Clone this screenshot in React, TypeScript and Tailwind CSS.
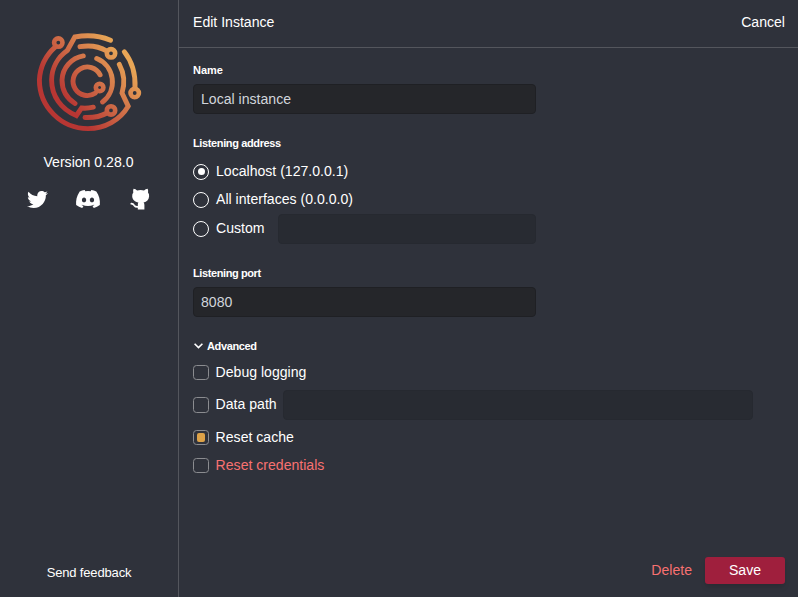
import type { ReactNode } from "react";
import { FaTwitter, FaDiscord } from "react-icons/fa";

function Logo() {
  return (
    <svg className="mr-[2px] block" width="108" height="102" viewBox="34 31 108 102" fill="none">
      <defs>
        <linearGradient id="ember" gradientUnits="userSpaceOnUse" x1="64" y1="98" x2="120" y2="52">
          <stop offset="0" stopColor="#b83633" />
          <stop offset="0.5" stopColor="#d06f48" />
          <stop offset="1" stopColor="#e8a656" />
        </linearGradient>
      </defs>
      <g stroke="url(#ember)" strokeWidth="4.9" strokeLinecap="round" strokeLinejoin="miter">
        <path d="M55.3 46.8A47.5 47.5 0 0 0 39.4 80A48.6 48.6 0 0 0 88 128.6C105 128.6 120 120 128.2 106.2L122 93A37 37 0 0 0 119.3 64.3" />
        <path d="M110.5 40.2C98 35 88 34.6 74.8 37L67.3 50.5A36.5 36.5 0 0 0 51.6 80C51.6 96 61 109 76.3 115.6L81.5 108Q87 108.6 93.3 107.2" />
        <path d="M80 46.7Q95 44 106.8 51" />
        <path d="M83.3 55.9A25.5 25.5 0 0 0 62 80C62 90 67 98.5 75 103.5" />
        <path d="M100.1 74.8A14.3 14.3 0 1 0 95.5 93" />
        <path d="M96.7 58.5A25.3 25.3 0 0 1 102.5 102" />
        <path d="M124.3 51.8Q136 66.5 135 88" />
        <path d="M85 117.5Q98 118 107 113" />
      </g>
      <g stroke="url(#ember)" strokeWidth="4.6">
        <circle cx="58.3" cy="42.6" r="4.2" />
        <circle cx="111" cy="53.3" r="4.2" />
        <circle cx="99.6" cy="87.5" r="3.8" />
        <circle cx="111" cy="110.4" r="4.2" />
        <circle cx="134.7" cy="93" r="4.2" />
      </g>
    </svg>
  );
}

function OctocatIcon() {
  return (
    <svg width="20" height="22" viewBox="0 0 20 22" fill="currentColor">
      <path d="M3.5.7C5 .8 6.2 1.7 7.2 2.4Q10.6 1.8 14 2.4C15 1.7 16.2.8 17.7.7Q18.4 2.7 18 4.6Q19.4 6.3 19.1 8.6C18.8 12 16.8 13.7 13.6 14.6Q14.4 15.6 14.4 17V21.4H7.8V17Q7.8 15.6 8.4 14.6C5 13.8 2.5 12 2.2 8.6Q2 6.3 3.3 4.6Q2.8 2.7 3.5.7Z" />
      <path d="M8.4 18.8C6 19.2 4.9 18.4 4.2 17.4C3.5 16.3 2.5 15.8 1.3 15.7" fill="none" stroke="currentColor" strokeWidth="1.7" strokeLinecap="round" />
    </svg>
  );
}

function Label({ children }: { children: ReactNode }) {
  return <div className="h-[14px] text-[11px] leading-[14px] font-bold">{children}</div>;
}

function Radio({ label, checked = false }: { label: string; checked?: boolean }) {
  return (
    <label className="flex items-center">
      <span className="mt-px flex size-4 items-center justify-center rounded-full border border-white">
        {checked && <span className="size-[7px] rounded-full bg-white" />}
      </span>
      <span className="ml-[7px]">{label}</span>
    </label>
  );
}

function Check({
  label,
  checked = false,
  danger = false,
  tall = false,
}: {
  label: string;
  checked?: boolean;
  danger?: boolean;
  tall?: boolean;
}) {
  return (
    <label className="flex items-center">
      <span
        className={`${tall ? "mt-[2px] h-4" : "mt-px h-[15px]"} flex w-4 items-center justify-center rounded-[3.5px] border border-[#8b8c90]`}
      >
        {checked && <span className="h-[9px] w-2 rounded-[2px] bg-[#dda248]" />}
      </span>
      <span className={danger ? "ml-[6.6px] text-[#f87171]" : "ml-[6.6px]"}>{label}</span>
    </label>
  );
}

const field = "h-[30px] rounded-[4px] border border-[#1f2024] bg-[#25262a] px-[7px] text-[#d1d5db] outline-none";
const disabledField = "h-[30px] rounded-[4px] border border-[#262930] bg-[#282b32] outline-none";

export default function App() {
  return (
    <div className="flex h-[597px] w-[798px] overflow-hidden bg-[#2f323b] font-['Liberation_Sans',Arial,sans-serif] text-[14.08px] leading-5 text-white">
      <aside className="flex w-[179px] shrink-0 flex-col items-center border-r border-[#54565d] pt-[31px] pb-[14px]">
        <Logo />
        <div className="mt-[19px] mr-px">Version 0.28.0</div>
        <div className="mt-[17px] mr-px flex h-5 w-[123px] items-center">
          <FaTwitter size={21} />
          <FaDiscord className="ml-[27px]" size={26} />
          <div className="ml-auto">
            <OctocatIcon />
          </div>
        </div>
        <div className="mt-auto text-[13px] tracking-[-0.16px]">Send feedback</div>
      </aside>
      <main className="flex min-w-0 flex-1 flex-col">
        <header className="flex h-12 shrink-0 items-center justify-between border-b border-[#54565d] pr-[13px] pb-[3px] pl-[14px]">
          <span>Edit Instance</span>
          <button>Cancel</button>
        </header>
        <section className="flex flex-col px-[14px] pt-[15px]">
          <Label>Name</Label>
          <input className={`${field} mt-[7px] w-[343px]`} defaultValue="Local instance" />
          <div className="mt-[22px] tracking-[-0.37px]">
            <Label>Listening address</Label>
          </div>
          <div className="mt-[11px] flex h-5 items-center">
            <Radio label="Localhost (127.0.0.1)" checked />
          </div>
          <div className="mt-2 flex h-5 items-center">
            <Radio label="All interfaces (0.0.0.0)" />
          </div>
          <div className="mt-[5px] flex h-[30px] w-[343px] items-start justify-between">
            <div className="mt-1">
              <Radio label="Custom" />
            </div>
            <input className={`${disabledField} w-[258px]`} disabled />
          </div>
          <div className="mt-[22px] tracking-[-0.4px]">
            <Label>Listening port</Label>
          </div>
          <input className={`${field} mt-[7px] w-[343px]`} defaultValue="8080" />
          <div className="mt-[22px] flex items-center tracking-[-0.38px]">
            <svg className="mr-1 ml-px" width="9" height="6" viewBox="0 0 9 6" fill="none" stroke="currentColor" strokeWidth="1.6">
              <path d="M.6.7 4.5 4.6 8.4.7" />
            </svg>
            <Label>Advanced</Label>
          </div>
          <div className="mt-[9px] flex h-5 items-center">
            <Check label="Debug logging" />
          </div>
          <div className="mt-2 flex h-[30px] w-[560px] items-start justify-between">
            <div className="mt-1">
              <Check label="Data path" tall />
            </div>
            <input className={`${disabledField} w-[470px]`} disabled />
          </div>
          <div className="mt-[7px] flex h-5 items-center">
            <Check label="Reset cache" checked />
          </div>
          <div className="mt-2 flex h-5 items-center">
            <Check label="Reset credentials" danger />
          </div>
        </section>
        <footer className="mt-auto flex items-center justify-end pr-[13px] pb-[13px]">
          <button className="pb-[2px] text-[#f87171]">Delete</button>
          <button className="ml-[13px] h-[27px] w-20 rounded-[3px] bg-[#9f1f3d] pb-px shadow-md">Save</button>
        </footer>
      </main>
    </div>
  );
}
